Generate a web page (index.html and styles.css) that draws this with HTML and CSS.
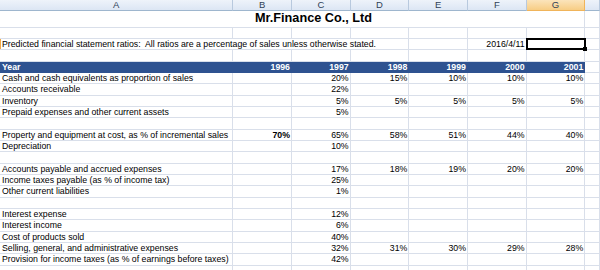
FILE: index.html
```html
<!DOCTYPE html>
<html>
<head>
<meta charset="utf-8">
<link rel="stylesheet" href="styles.css">
</head>
<body>
<div class="sheet">
  <div class="row hdr">
    <div class="cell">A</div><div class="cell">B</div><div class="cell">C</div><div class="cell">D</div><div class="cell">E</div><div class="cell">F</div><div class="cell hsel">G</div><div class="cell"></div>
  </div>
  <div class="row title-row">
    <div class="cell title">Mr.Finance Co., Ltd</div><div class="cell"></div>
  </div>
  <div class="row"><div class="cell"></div><div class="cell"></div><div class="cell"></div><div class="cell"></div><div class="cell"></div><div class="cell"></div><div class="cell"></div><div class="cell"></div></div>
  <div class="row">
    <div class="cell note">Predicted financial statement ratios:&nbsp; All ratios are a percentage of sales unless otherwise stated.</div><div class="cell"></div><div class="cell num">2016/4/11</div><div class="cell sel"></div><div class="cell"></div>
  </div>
  <div class="row"><div class="cell"></div><div class="cell"></div><div class="cell"></div><div class="cell"></div><div class="cell"></div><div class="cell"></div><div class="cell"></div><div class="cell"></div></div>
  <div class="row band">
    <div class="cell">Year</div><div class="cell num">1996</div><div class="cell num">1997</div><div class="cell num">1998</div><div class="cell num">1999</div><div class="cell num">2000</div><div class="cell num">2001</div><div class="cell plain"></div>
  </div>
  <div class="row"><div class="cell lbl">Cash and cash equivalents as proportion of sales</div><div class="cell"></div><div class="cell num">20%</div><div class="cell num">15%</div><div class="cell num">10%</div><div class="cell num">10%</div><div class="cell num">10%</div><div class="cell"></div></div>
  <div class="row"><div class="cell lbl">Accounts receivable</div><div class="cell"></div><div class="cell num">22%</div><div class="cell"></div><div class="cell"></div><div class="cell"></div><div class="cell"></div><div class="cell"></div></div>
  <div class="row"><div class="cell lbl">Inventory</div><div class="cell"></div><div class="cell num">5%</div><div class="cell num">5%</div><div class="cell num">5%</div><div class="cell num">5%</div><div class="cell num">5%</div><div class="cell"></div></div>
  <div class="row"><div class="cell lbl">Prepaid expenses and other current assets</div><div class="cell"></div><div class="cell num">5%</div><div class="cell"></div><div class="cell"></div><div class="cell"></div><div class="cell"></div><div class="cell"></div></div>
  <div class="row"><div class="cell"></div><div class="cell"></div><div class="cell"></div><div class="cell"></div><div class="cell"></div><div class="cell"></div><div class="cell"></div><div class="cell"></div></div>
  <div class="row"><div class="cell lbl">Property and equipment at cost, as % of incremental sales</div><div class="cell num bold">70%</div><div class="cell num">65%</div><div class="cell num">58%</div><div class="cell num">51%</div><div class="cell num">44%</div><div class="cell num">40%</div><div class="cell"></div></div>
  <div class="row"><div class="cell lbl">Depreciation</div><div class="cell"></div><div class="cell num">10%</div><div class="cell"></div><div class="cell"></div><div class="cell"></div><div class="cell"></div><div class="cell"></div></div>
  <div class="row"><div class="cell"></div><div class="cell"></div><div class="cell"></div><div class="cell"></div><div class="cell"></div><div class="cell"></div><div class="cell"></div><div class="cell"></div></div>
  <div class="row"><div class="cell lbl">Accounts payable and accrued expenses</div><div class="cell"></div><div class="cell num">17%</div><div class="cell num">18%</div><div class="cell num">19%</div><div class="cell num">20%</div><div class="cell num">20%</div><div class="cell"></div></div>
  <div class="row"><div class="cell lbl">Income taxes payable (as % of income tax)</div><div class="cell"></div><div class="cell num">25%</div><div class="cell"></div><div class="cell"></div><div class="cell"></div><div class="cell"></div><div class="cell"></div></div>
  <div class="row"><div class="cell lbl">Other current liabilities</div><div class="cell"></div><div class="cell num">1%</div><div class="cell"></div><div class="cell"></div><div class="cell"></div><div class="cell"></div><div class="cell"></div></div>
  <div class="row"><div class="cell"></div><div class="cell"></div><div class="cell"></div><div class="cell"></div><div class="cell"></div><div class="cell"></div><div class="cell"></div><div class="cell"></div></div>
  <div class="row"><div class="cell lbl">Interest expense</div><div class="cell"></div><div class="cell num">12%</div><div class="cell"></div><div class="cell"></div><div class="cell"></div><div class="cell"></div><div class="cell"></div></div>
  <div class="row"><div class="cell lbl">Interest income</div><div class="cell"></div><div class="cell num">6%</div><div class="cell"></div><div class="cell"></div><div class="cell"></div><div class="cell"></div><div class="cell"></div></div>
  <div class="row"><div class="cell lbl">Cost of products sold</div><div class="cell"></div><div class="cell num">40%</div><div class="cell"></div><div class="cell"></div><div class="cell"></div><div class="cell"></div><div class="cell"></div></div>
  <div class="row"><div class="cell lbl">Selling, general, and administrative expenses</div><div class="cell"></div><div class="cell num">32%</div><div class="cell num">31%</div><div class="cell num">30%</div><div class="cell num">29%</div><div class="cell num">28%</div><div class="cell"></div></div>
  <div class="row"><div class="cell lbl">Provision for income taxes (as % of earnings before taxes)</div><div class="cell"></div><div class="cell num">42%</div><div class="cell"></div><div class="cell"></div><div class="cell"></div><div class="cell"></div><div class="cell"></div></div>
  <div class="row"><div class="cell"></div><div class="cell"></div><div class="cell"></div><div class="cell"></div><div class="cell"></div><div class="cell"></div><div class="cell"></div><div class="cell"></div></div>
</div>
</body>
</html>
```
FILE: styles.css
```css
* { box-sizing: border-box; margin: 0; padding: 0; }
html, body { background: #fff; }
body {
  margin: 0;
  overflow: hidden;
  font-family: "Liberation Sans", Arial, sans-serif;
  font-size: 8.75px;
  color: #000;
}
.sheet { width: 600px; }
.row {
  display: grid;
  grid-template-columns: 233.33px repeat(6, 58.67px) 1fr;
  height: 11.33px;
}
.cell {
  border-right: 1px solid #d9dfea;
  border-bottom: 1px solid #d9dfea;
  line-height: 10.33px;
  padding: 0 2px;
  white-space: nowrap;
  overflow: hidden;
}
.lbl { overflow: visible; }
.num { text-align: right; padding-right: 1px; }
.bold { font-weight: bold; }

.hdr .cell {
  background: linear-gradient(#eef3fa, #dce6f4);
  border-right-color: #b8c9de;
  border-bottom-color: #9eb6ce;
  text-align: center;
  color: #2f3f57;
  font-size: 9.5px;
  line-height: 10.8px;
}
.hdr .hsel {
  background: linear-gradient(#fbe4bb, #f7cd84);
  border-right-color: #f0b45a;
  border-bottom-color: #f0b45a;
}

.title-row { height: 16.33px; }
.title-row .cell { line-height: 15.33px; }
.title {
  grid-column: span 7;
  padding-left: 255px;
  font-size: 12.7px;
  font-weight: bold;
  color: #000;
}

.note {
  grid-column: span 4;
  box-shadow: inset 1px 0 #f2a94a;
}

.sel { position: relative; overflow: visible; }
.sel::after {
  content: "";
  position: absolute;
  left: -1px;
  top: -1px;
  right: -2px;
  bottom: -1px;
  border: 2px solid #000;
}
.sel::before {
  content: "";
  position: absolute;
  right: -3px;
  bottom: -2px;
  width: 4px;
  height: 4px;
  background: #000;
  z-index: 1;
}

.band .cell {
  background: #2e5290;
  border-color: #2e5290;
  color: #fff;
  font-weight: bold;
}
.band .plain {
  background: #fff;
  border-right-color: #d9dfea;
  border-bottom-color: #d9dfea;
}
```
